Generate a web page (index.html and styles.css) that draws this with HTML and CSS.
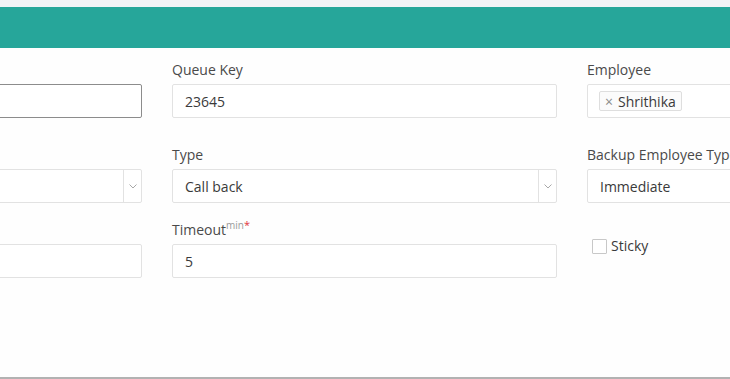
FILE: index.html
```html
<!DOCTYPE html>
<html lang="en">
<head>
    <meta charset="UTF-8">
    <meta name="viewport" content="width=device-width, initial-scale=1.0">
    <title>Queue Settings</title>
    <link rel="stylesheet" href="styles.css">
</head>
<body>
    <div class="page">
        <div class="top-strip"></div>
        <div class="header-bar"></div>

        <form class="queue-form">
            <div class="form-row first-row">
                <div class="input-group">
                    <label for="queueName"></label>
                    <input type="text" id="queueName" class="focused">
                </div>
                <div class="input-group">
                    <label for="queueKey">Queue Key</label>
                    <input type="text" id="queueKey" value="23645">
                </div>
                <div class="input-group">
                    <label>Employee</label>
                    <div class="tag-box">
                        <span class="tag"><span class="tag-x">&times;</span>Shrithika</span>
                    </div>
                </div>
            </div>

            <div class="form-row second-row">
                <div class="input-group">
                    <label></label>
                    <div class="select-box">
                        <span class="select-value"></span>
                        <span class="select-arrow">
                            <svg width="8" height="5" viewBox="0 0 8 5"><path d="M0.5 0.5 L4 4 L7.5 0.5" fill="none" stroke="#a8a8a8" stroke-width="1"/></svg>
                        </span>
                    </div>
                </div>
                <div class="input-group">
                    <label>Type</label>
                    <div class="select-box">
                        <span class="select-value">Call back</span>
                        <span class="select-arrow">
                            <svg width="8" height="5" viewBox="0 0 8 5"><path d="M0.5 0.5 L4 4 L7.5 0.5" fill="none" stroke="#a8a8a8" stroke-width="1"/></svg>
                        </span>
                    </div>
                </div>
                <div class="input-group">
                    <label>Backup Employee Type</label>
                    <div class="select-box">
                        <span class="select-value">Immediate</span>
                        <span class="select-arrow">
                            <svg width="8" height="5" viewBox="0 0 8 5"><path d="M0.5 0.5 L4 4 L7.5 0.5" fill="none" stroke="#a8a8a8" stroke-width="1"/></svg>
                        </span>
                    </div>
                </div>
            </div>

            <div class="form-row">
                <div class="input-group">
                    <label for="retry"></label>
                    <input type="text" id="retry">
                </div>
                <div class="input-group">
                    <label for="timeout" class="with-unit">Timeout<sup class="unit">min</sup><sup class="required">*</sup></label>
                    <input type="text" id="timeout" value="5">
                </div>
                <div class="input-group check-group">
                    <input type="checkbox" id="sticky">
                    <label for="sticky">Sticky</label>
                </div>
            </div>
        </form>
    </div>
</body>
</html>
```

FILE: styles.css
```css
* {
    margin: 0;
    padding: 0;
    box-sizing: border-box;
    font-family: 'Open Sans', 'Segoe UI', sans-serif;
}

body {
    background: #fefefe;
    overflow: hidden;
}

.page {
    height: 100vh;
    border-bottom: 2px solid #b2b2b2;
    overflow: hidden;
}

.top-strip {
    height: 7px;
    background: #f1f3f6;
}

.header-bar {
    height: 41px;
    background: #26a69a;
}

.queue-form {
    margin-top: 12px;
    margin-left: -243px;
    width: 1215px;
}

.form-row {
    display: grid;
    grid-template-columns: repeat(3, 385px);
    column-gap: 30px;
    margin-bottom: 17px;
}

.form-row.first-row {
    margin-bottom: 27px;
}

.input-group label {
    display: block;
    height: 20px;
    line-height: 20px;
    margin-bottom: 4px;
    font-size: 14px;
    color: #4a4a4a;
    white-space: nowrap;
}

.input-group label.with-unit {
    height: 24px;
    line-height: 19px;
    margin-bottom: 0;
}

.input-group input[type="text"],
.select-box,
.tag-box {
    display: flex;
    align-items: center;
    width: 100%;
    height: 34px;
    padding: 0 12px;
    border: 1px solid #e2e2e2;
    border-radius: 2px;
    background: #fff;
    font-size: 14px;
    color: #3a3a3a;
}

.input-group input.focused {
    border-color: #8c8c8c;
}

.select-box {
    padding-right: 0;
}

.select-value {
    flex: 1;
}

.select-arrow {
    display: flex;
    align-items: center;
    justify-content: center;
    width: 18px;
    height: 100%;
    border-left: 1px solid #e2e2e2;
}

.tag-box {
    padding: 0 11px;
}

.tag {
    display: inline-flex;
    align-items: center;
    height: 20px;
    padding: 0 5px;
    border: 1px solid #dedede;
    border-radius: 2px;
    background: #fbfbfb;
    font-size: 14px;
    color: #3a3a3a;
}

.tag-x {
    margin-right: 5px;
    color: #8a8a8a;
    font-size: 14px;
}

.unit,
.required {
    line-height: 0;
}

.unit {
    font-size: 10px;
    color: #9a9a9a;
}

.required {
    font-size: 11px;
    color: #e0343d;
}

.check-group {
    display: flex;
    align-items: center;
    gap: 4px;
    height: 58px;
    padding-left: 5px;
    padding-bottom: 6px;
}

.check-group input {
    appearance: none;
    width: 15px;
    height: 15px;
    border: 1px solid #c8c8c8;
    border-radius: 1px;
    background: #fff;
}

.check-group label {
    margin: 0;
    color: #3a3a3a;
}
```
